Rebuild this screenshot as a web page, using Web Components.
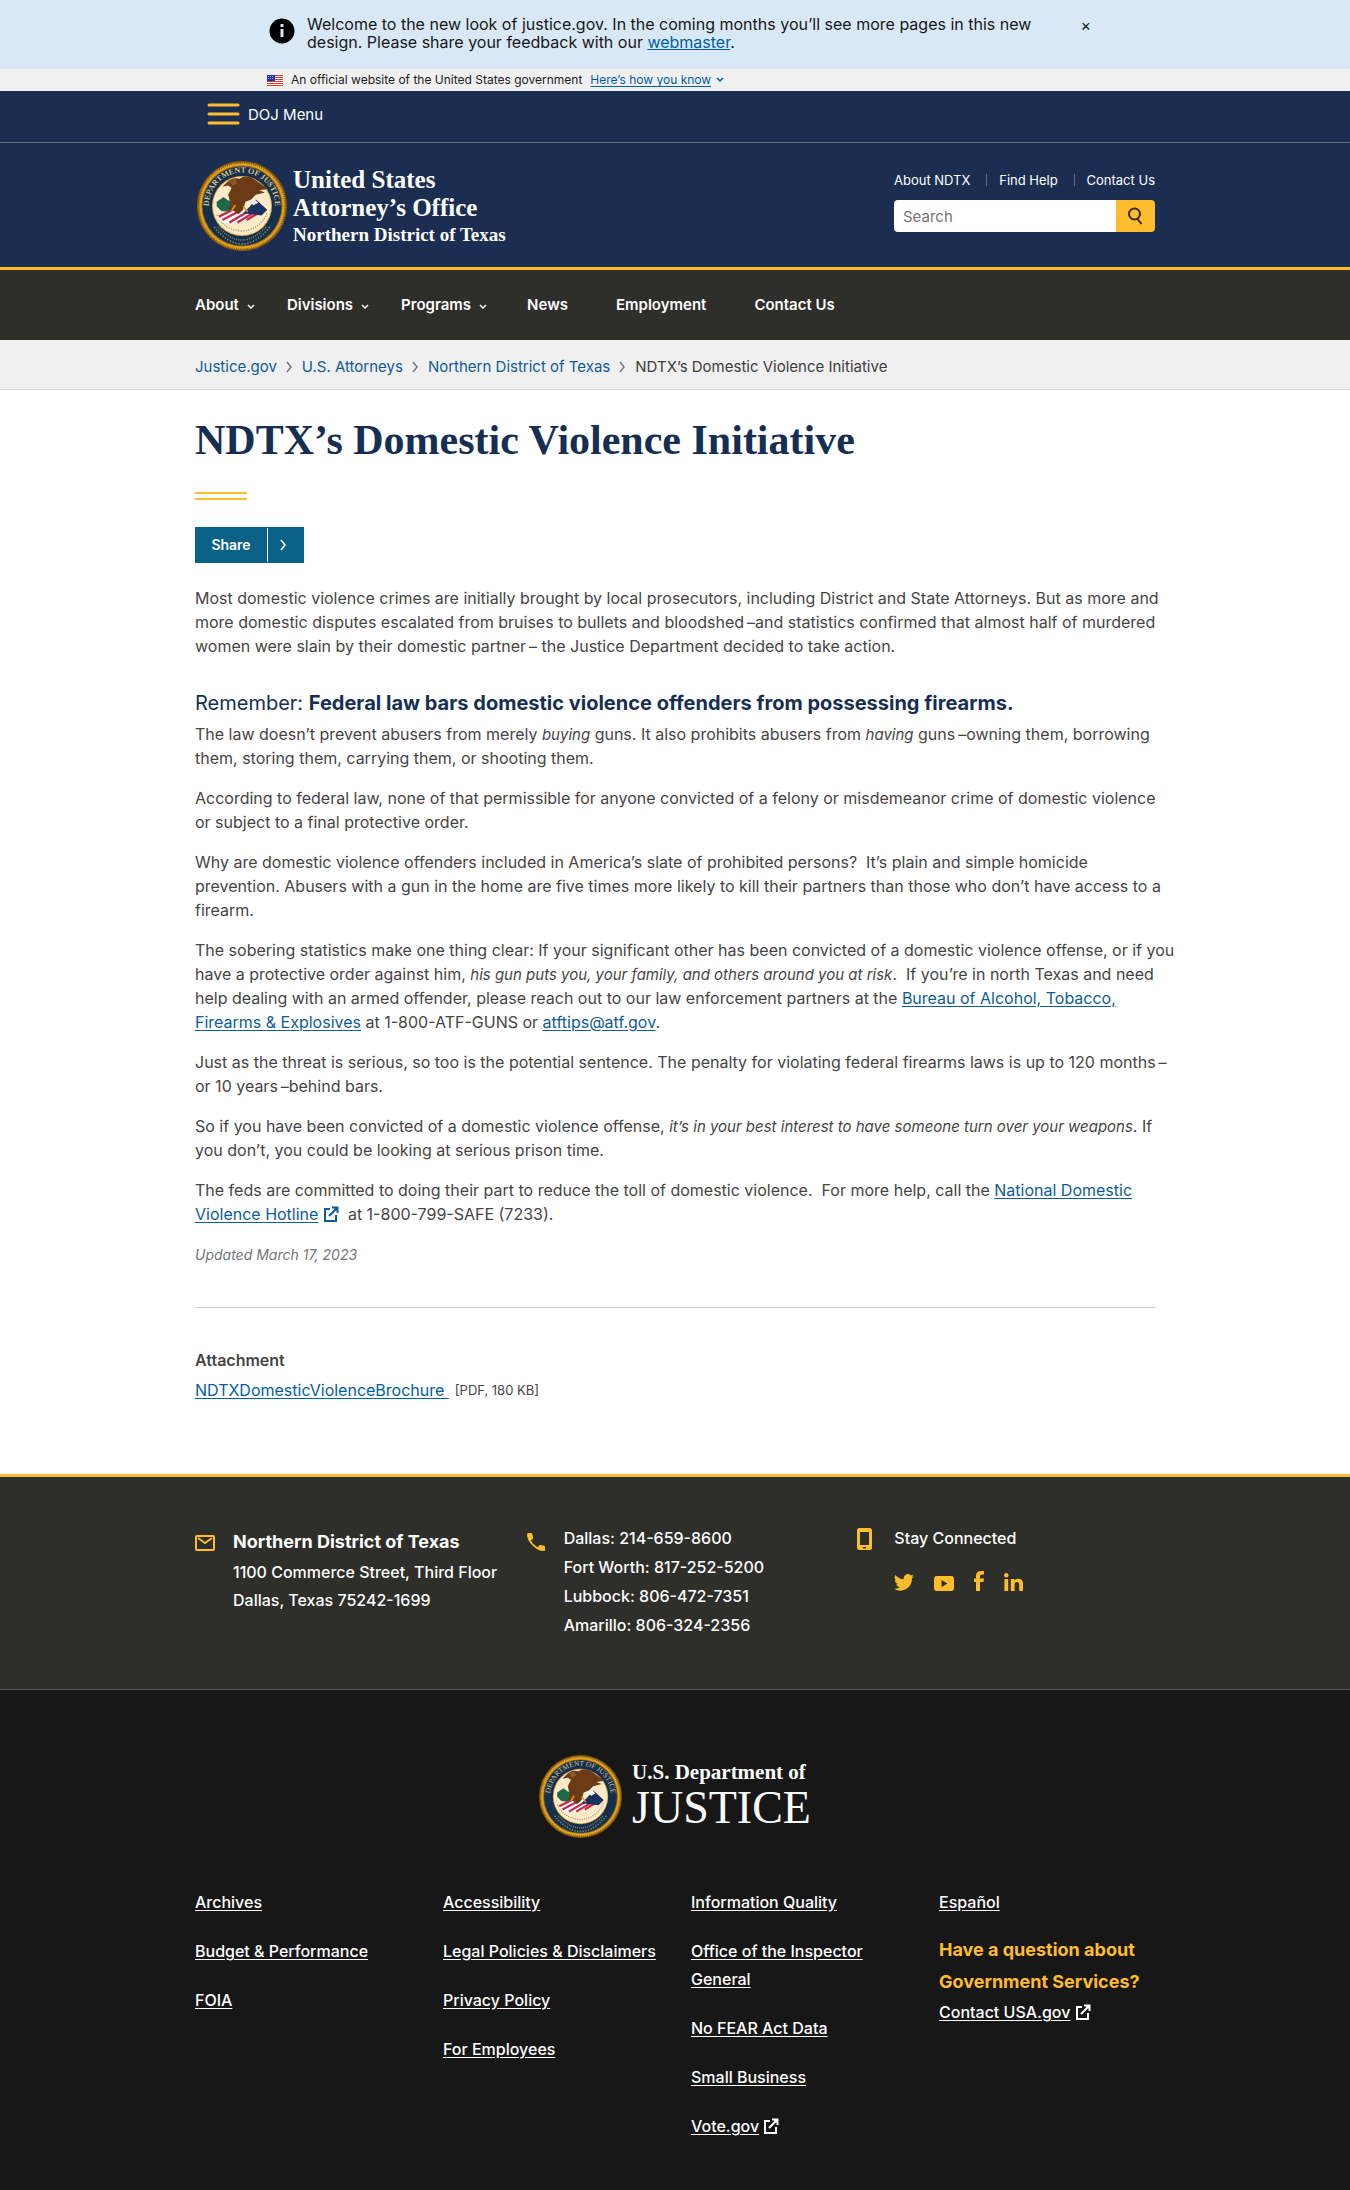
<!DOCTYPE html>
<html lang="en">
<head>
<meta charset="utf-8">
<meta name="viewport" content="width=device-width, initial-scale=1">
<title>Northern District of Texas | NDTX’s Domestic Violence Initiative</title>
<style>
:root{--navy:#1b2e52;--gold:#ffbc2c;--link:#0f5c96;--dark:#2e2e2a;--wrap:960px;--serif:"Liberation Serif",serif}
body{margin:0;background:#171717;color:#454545;font:16px/24px Inter,sans-serif}
</style>
</head>
<body>
<doj-alert></doj-alert>
<gov-banner></gov-banner>
<doj-header></doj-header>
<site-nav></site-nav>
<bread-crumbs></bread-crumbs>
<doj-page heading="NDTX’s Domestic Violence Initiative"></doj-page>
<contact-footer></contact-footer>
<doj-footer></doj-footer>

<script>
const define = (name, html) => customElements.define(name, class extends HTMLElement {
  connectedCallback() {
    if (this.shadowRoot) return;
    const t = document.createElement('template');
    t.innerHTML = '<style>*{box-sizing:border-box}a{color:inherit}ul{list-style:none;margin:0;padding:0}.wrap{max-width:var(--wrap);margin:0 auto}svg{display:block;flex:none}</style>' + (typeof html === 'function' ? html(this) : html);
    this.attachShadow({mode: 'open'}).append(t.content.cloneNode(true));
  }
});
const chevron = (w, h, d, s) => `<svg width="${w}" height="${h}" viewBox="0 0 ${w} ${h}" fill="none" stroke="currentColor" stroke-width="${s}" aria-hidden="true"><path d="${d}"/></svg>`;
const down = chevron(8, 6, 'M1 1l3 3 3-3', 1.5);
const right = chevron(7, 12, 'M1 1l4 5-4 5', 1.5);

define('ext-icon', `<style>:host{display:inline-block;vertical-align:-2px}</style>
<svg width="16" height="16" viewBox="0 0 16 16" fill="none" stroke="currentColor" stroke-width="2" aria-hidden="true"><path d="M7 3H2v12h11V9M6 10l7-7M9 1.500h5.500V7"/><path d="M10 1h5v5z" fill="currentColor" stroke="none"/></svg>`);

define('doj-seal', `<style>:host{display:block;flex:none;width:var(--seal,90px)}svg{width:100%;height:auto}</style>
<svg viewBox="0 0 90 90" role="img" aria-label="Department of Justice seal">
<circle cx="45" cy="45" r="45" fill="#8a5a0c"/><circle cx="45" cy="45" r="43.500" fill="#e0a31d"/>
<circle cx="45" cy="45" r="43" fill="none" stroke="#8a5a0c" stroke-width="1.500" stroke-dasharray="1 1.200"/>
<circle cx="45" cy="45" r="40.500" fill="#9a6712"/><circle cx="45" cy="45" r="39.500" fill="#15304f"/>
<circle cx="45" cy="45" r="30" fill="#e3b04a"/><circle cx="45" cy="45" r="29" fill="#fdebc8"/>
<path id="ring" d="M14 56A33 33 0 1 1 76 56" fill="none"/>
<text font-family="Liberation Serif" font-size="8" fill="#d8c48a" text-anchor="middle"><textPath href="#ring" startOffset="50%">DEPARTMENT OF JUSTICE</textPath></text>
<path d="M17 66Q45 100 73 66" fill="none" stroke="#8b8a5c" stroke-width="1.500" stroke-dasharray="1.500 1.500"/>
<path d="M21 66Q45 92 69 66" fill="none" stroke="#8b8a5c" stroke-width="1.500" stroke-dasharray="1 1.200"/>
<path d="M20 54Q27 69 45 70Q63 69 70 52" fill="none" stroke="#a59270" stroke-width="1.500" stroke-dasharray="1 1.500"/>
<g transform="translate(45 43) scale(1.150) translate(-45 -45)">
<path d="M23 43l6-4 4 3 5 1 4 6-7 3-8-1-4-4z" fill="#1d6a49"/>
<path d="M24 57l16-8h24l-20 12H28z" fill="#fff"/>
<path d="M25 56l12-6M28 59l17-9M34 61l17-10M41 61l15-9M49 59l10-6" stroke="#c4284b" stroke-width="2"/>
<path d="M52 47l5-6 10 9-5 5-16-2z" fill="#1a3262"/><path d="M52 43l3-3 4 4-4 2z" fill="#fff"/>
<path d="M31 27q5-6 12-4 5-4 12 0l13 9-8 1 5 2-8 2-4 4-5 2-2 7-4 4-4-3-5-1 2-5-2-8 3-6-3-2-5 1z" fill="#6b3a17"/>
<path d="M34 25l5-2 2 4-4 2z" fill="#8b5a2e"/><path d="M39 46l-3 5M46 47l4 5" stroke="#d79a1e" stroke-width="1.500"/></g>
</svg>`);

define('doj-alert', `<style>
:host{display:block;background:#d9e8f6;color:#171717;line-height:18px}
.in{display:flex;gap:12px;max-width:840px;margin:0 auto;padding:15px 0 18px 14px}
p{margin:0}.icon{margin:3px 0 0}
button{margin:-2px 0 auto auto;padding:0 4px;border:0;background:none;font:16px/24px Inter,sans-serif;color:#171717}
a{color:#005ea2}</style>
<div class="in"><svg class="icon" width="26" height="26" viewBox="0 0 26 26" aria-hidden="true"><circle cx="13" cy="13" r="12.500"/><path d="M11.500 6h3v3h-3zM11.500 11h3v8h-3z" fill="#d9e8f6"/></svg>
<p>Welcome to the new look of justice.gov. In the coming months you’ll see more pages in this new<br>design. Please share your feedback with our <a href="#webmaster">webmaster</a>.</p><button aria-label="Close">×</button></div>`);

define('gov-banner', `<style>
:host{display:block;background:#f0f0f0;color:#1b1b1b;font-size:12px;line-height:22px}
.in{display:flex;align-items:center;gap:8px;max-width:816px;margin:0 auto}
button{display:flex;align-items:center;gap:5px;border:0;padding:0;background:none;font:inherit;color:#005ea2}u{text-underline-offset:2px}</style>
<div class="in"><svg width="16" height="11" viewBox="0 0 16 11" aria-hidden="true"><path fill="#fff" d="M0 0h16v11H0z"/><path d="M0 .5h16M0 2.500h16M0 4.500h16M0 6.500h16M0 8.500h16M0 10.500h16" stroke="#db3e1f"/><path fill="#1e33b1" d="M0 0h8v6H0z"/><path d="M1 1.500h6M1 3.500h6" stroke="#9aa5e0" stroke-dasharray="1 1"/></svg>
<span>An official website of the United States government</span><button><u>Here’s how you know</u>${down}</button></div>`);

define('doj-header', `<style>
:host{display:block;background:var(--navy);color:#fff;border-bottom:3px solid var(--gold)}
.menu{height:52px;border-bottom:1px solid #5f6d86}
.menu button{display:flex;gap:8px;margin:0 0 0 12px;padding:12px 0;border:0;background:none;color:#fff;font:15px/24px Inter,sans-serif}
.main{display:flex;justify-content:space-between;height:124px}
.brand{display:flex;gap:6px;padding:18px 0 0 2px;color:#fff;text-decoration:none;font-family:var(--serif);font-weight:700}
.brand span{display:block;padding-top:5px;font-size:25px;line-height:28px}.brand small{display:block;font-size:19px;line-height:26px}
.tools{width:261px;padding-top:27px}
ul{display:flex;justify-content:space-between;font-size:13px;line-height:20px}
li+li{display:flex;align-items:center}li+li:before{content:"";height:12px;margin-right:12px;border-left:1px solid #5f6d86}
li a{text-decoration:none}
form{display:flex;margin-top:10px;border-radius:4px;overflow:hidden}
input{flex:1;min-width:0;height:32px;border:0;padding:0 9px;font:15px Inter,sans-serif}input::placeholder{color:#757575}
form button{width:39px;border:0;padding:0 0 0 12px;background:var(--gold);color:#3b2c10}</style>
<div class="menu"><div class="wrap"><button><svg width="33" height="24" viewBox="0 0 33 24" stroke="#ffbc2c" stroke-width="3" stroke-linecap="round" aria-hidden="true"><path d="M2 2h29M2 11h29M2 20h29"/></svg>DOJ Menu</button></div></div>
<div class="wrap main"><a class="brand" href="#home"><doj-seal></doj-seal><span>United States<br>Attorney’s Office<small>Northern District of Texas</small></span></a>
<div class="tools"><ul><li><a href="#about">About NDTX</a></li><li><a href="#help">Find Help</a></li><li><a href="#contact">Contact Us</a></li></ul>
<form><input type="search" placeholder="Search" aria-label="Search"><button type="button" aria-label="Search"><svg width="15" height="18" viewBox="0 0 15 18" fill="none" stroke="currentColor" stroke-width="2"><circle cx="6.500" cy="7" r="5.500"/><path d="M9.500 12l4 5"/></svg></button></form></div></div>`);

define('site-nav', `<style>
:host{display:block;background:var(--dark);color:#fff;font-size:15px;font-weight:600}
ul{display:flex;gap:48px;height:70px;align-items:center}
.sub{margin-right:-16px}a{display:flex;align-items:center;gap:8px;text-decoration:none}svg{margin-top:3px}.last{margin-right:-8px}</style>
<nav class="wrap"><ul><li class="sub"><a href="#about">About ${down}</a></li><li class="sub"><a href="#divisions">Divisions ${down}</a></li><li class="last"><a href="#programs">Programs ${down}</a></li><li><a href="#news">News</a></li><li><a href="#jobs">Employment</a></li><li><a href="#contact">Contact Us</a></li></ul></nav>`);

define('bread-crumbs', `<style>
:host{display:block;background:#f0f0f0;border-bottom:1px solid #dcdee0;color:#3d3d3d;font-size:15px;line-height:22px}
ul{display:flex;flex-wrap:wrap;padding:16px 0 11px}li{display:flex;align-items:center}
a{color:var(--link);text-decoration:none}svg{margin:0 9px;color:#777}</style>
<nav class="wrap" aria-label="Breadcrumbs"><ul><li><a href="#doj">Justice.gov</a>${right}</li><li><a href="#usao">U.S. Attorneys</a>${right}</li><li><a href="#ndtx">Northern District of Texas</a>${right}</li><li>NDTX’s Domestic Violence Initiative</li></ul></nav>`);

define('share-button', `<style>:host{display:block}
button{display:flex;height:36px;align-items:stretch;border:0;padding:0;background:#0a6187;color:#fff;font:600 14px/36px Inter,sans-serif}
span{width:72px}i{display:flex;align-items:center;padding-left:12px;width:37px;margin:1px 0;border-left:1px solid #fff}</style>
<button><span>Share</span><i>${right}</i></button>`);

define('article-body', `<style>
:host{display:block}
p{margin:0 0 16px}em{font-size:15px;line-height:20px}h2{margin:0 0 7px;padding-top:17px;color:#162e51;font-size:20px;line-height:24px;font-weight:400}
h2 strong{font-weight:700}a,ext-icon{color:var(--link)}a{text-underline-offset:2px}
br{display:none}
@media(min-width:1000px){p{white-space:nowrap}br{display:inline}}</style>
<p>Most domestic violence crimes are initially brought by local prosecutors, including District and State Attorneys. But as more and <br>more domestic disputes escalated from bruises to bullets and bloodshed&thinsp;–and statistics confirmed that almost half of murdered <br>women were slain by their domestic partner&thinsp;– the Justice Department decided to take action.</p>
<h2>Remember: <strong>Federal law bars domestic violence offenders from possessing firearms.</strong></h2>
<p>The law doesn’t prevent abusers from merely <em>buying</em> guns. It also prohibits abusers from <em>having</em> guns&thinsp;–owning them, borrowing <br>them, storing them, carrying them, or shooting them.</p>
<p>According to federal law, none of that permissible for anyone convicted of a felony or misdemeanor crime of domestic violence <br>or subject to a final protective order.</p>
<p>Why are domestic violence offenders included in America’s slate of prohibited persons?&nbsp; It’s plain and simple homicide <br>prevention. Abusers with a gun in the home are five times more likely to kill their partners than those who don’t have access to a <br>firearm.</p>
<p>The sobering statistics make one thing clear: If your significant other has been convicted of a domestic violence offense, or if you <br>have a protective order against him, <em>his gun puts you, your family, and others around you at risk</em>.&nbsp; If you’re in north Texas and need <br>help dealing with an armed offender, please reach out to our law enforcement partners at the <a href="#atf">Bureau of Alcohol, Tobacco, <br>Firearms &amp; Explosives</a> at 1-800-ATF-GUNS or <a href="#mail">atftips@atf.gov</a>.</p>
<p>Just as the threat is serious, so too is the potential sentence. The penalty for violating federal firearms laws is up to 120 months&thinsp;– <br>or 10 years&thinsp;–behind bars.</p>
<p>So if you have been convicted of a domestic violence offense, <em>it’s in your best interest to have someone turn over your weapons</em>. If <br>you don’t, you could be looking at serious prison time.</p>
<p>The feds are committed to doing their part to reduce the toll of domestic violence.&nbsp; For more help, call the <a href="#hotline">National Domestic <br>Violence Hotline</a> <ext-icon></ext-icon>&nbsp; at 1-800-799-SAFE (7233).</p>`);

define('doj-page', el => `<style>
:host{display:block;background:#fff;padding-bottom:72px}
h1{margin:0;padding-top:25px;color:#162e51;font:700 42px/50px var(--serif)}
.rule{width:52px;height:8px;margin:27px 0;border:solid var(--gold);border-width:2px 0}
share-button{margin-bottom:23px}
.date{margin:0 0 40px;padding-top:1px;color:#71767a;font-size:14px;font-style:italic}
hr{margin:0 0 40px;border:0;border-top:1px solid #c6cace}
h3{margin:0 0 6px;font-size:16px;line-height:24px;font-weight:600}
.file{display:flex;align-items:center;gap:6px;margin:0}.file a{color:#005ea2;text-underline-offset:2px}.file span{font-size:13px}</style>
<main class="wrap"><h1>${el.getAttribute('heading')}</h1><div class="rule"></div><share-button></share-button>
<article-body></article-body><p class="date">Updated March 17, 2023</p><hr>
<h3>Attachment</h3><p class="file"><a href="#brochure">NDTXDomesticViolenceBrochure&nbsp;</a><span>[PDF, 180 KB]</span></p></main>`);

define('contact-footer', `<style>
:host{display:block;background:var(--dark);color:#fff;border-top:3px solid var(--gold);border-bottom:1px solid #565656;font-weight:500}
.cols{display:grid;grid-template-columns:repeat(3,minmax(0,1fr));column-gap:32px;padding:47px 0 49px}
section{display:flex;line-height:29px}.ic{flex:none;width:38px;padding-top:4px;color:var(--gold)}
p,h2{margin:0;white-space:nowrap}h2{padding-top:2px;font-size:18px;line-height:32px;font-weight:700}.addr{line-height:28px}
.social{display:flex;align-items:flex-end;gap:20px;height:20px;margin-top:18px;color:var(--gold)}.social a{display:block}</style>
<div class="wrap cols">
<section><div class="ic"><svg width="20" height="28" viewBox="0 0 20 28" fill="none" stroke="currentColor" stroke-width="2" aria-hidden="true"><rect x="1" y="8" width="18" height="14" rx="1"/><path d="M3 10l7 5 7-5"/></svg></div><div class="addr"><h2>Northern District of Texas</h2><p>1100 Commerce Street, Third Floor</p><p>Dallas, Texas 75242-1699</p></div></section>
<section><div class="ic"><svg width="20" height="28" viewBox="0 0 20 28" fill="currentColor" aria-hidden="true"><path d="M1 6.500Q1 5 2.500 5H5q1 0 1.300 1l.8 3.500q.1.800-.5 1.400L4.800 12.500q2.300 4.600 6.700 6.800l1.700-1.800q.5-.6 1.400-.4l3.500.7q.9.200.9 1.200V22q0 1-1 1Q12 23 6.500 17.500T1 6.500z"/></svg></div><div><p>Dallas: 214-659-8600</p><p>Fort Worth: 817-252-5200</p><p>Lubbock: 806-472-7351</p><p>Amarillo: 806-324-2356</p></div></section>
<section><div class="ic"><svg width="18" height="24" viewBox="0 0 18 24" aria-hidden="true"><rect x="1" width="15" height="22" rx="2.500" fill="currentColor"/><path fill="#2e2e2a" d="M4 4h9v13H4zM7 19h3v1.500H7z"/></svg></div><div><p>Stay Connected</p><div class="social">
<a href="#twitter" aria-label="Twitter"><svg width="20" height="17" viewBox="0 0 24 20" fill="currentColor"><path d="M24 2.400a10 10 0 0 1-2.800.8A5 5 0 0 0 23.300.5a10 10 0 0 1-3.100 1.200 4.900 4.900 0 0 0-8.400 4.500A14 14 0 0 1 1.700 1 4.900 4.900 0 0 0 3.200 7.600 5 5 0 0 1 1 7c0 2.400 1.700 4.400 3.900 4.900a5 5 0 0 1-2.200.1 4.900 4.900 0 0 0 4.600 3.400A10 10 0 0 1 0 17.400 14 14 0 0 0 21.500 5a10 10 0 0 0 2.500-2.600z"/></svg></a>
<a href="#youtube" aria-label="YouTube"><svg width="20" height="15" viewBox="0 0 20 15"><rect width="20" height="15" rx="3" fill="currentColor"/><path d="M7.500 4l6 3.500-6 3.500z" fill="#2e2e2a"/></svg></a>
<a href="#facebook" aria-label="Facebook"><svg width="10" height="20" viewBox="0 0 10 20" fill="currentColor"><path d="M2 20v-9H0V7.500h2V5q0-5 5-5h3v3.500H8q-2 0-2 1.700v2.300h4L9.500 11H6v9z"/></svg></a>
<a href="#linkedin" aria-label="LinkedIn"><svg width="19" height="18" viewBox="0 0 19 18" fill="currentColor"><circle cx="2.300" cy="2.300" r="2.200"/><path d="M.4 6h3.800v12H.4zM6.800 6h3.600v1.600Q11.500 5.700 14 5.700q5 0 5 5.300v7h-3.800v-6.200q0-2.800-2.200-2.800-2.400 0-2.400 2.900V18H6.800z"/></svg></a>
</div></div></section></div>`);

define('doj-footer', `<style>
:host{display:block;background:#171717;color:#fff;font-weight:500;line-height:28px;padding:65px 0 40px}
.brand{display:flex;justify-content:center;gap:10px;--seal:83px;font-family:var(--serif);text-decoration:none}
.brand span{display:block;padding-top:5px;font-size:21px;line-height:24px;font-weight:700}.brand b{display:block;font-weight:400;font-size:46px;line-height:48px}
.cols{display:grid;grid-template-columns:repeat(4,minmax(0,1fr));column-gap:32px;padding-top:50px}
ul{display:grid;gap:21px;align-content:start}a{text-underline-offset:2px}
h2{margin:18px 0 0;color:var(--gold);font-size:18px;line-height:32px;white-space:nowrap}p{margin:0}</style>
<a class="brand" href="#justice"><doj-seal></doj-seal><span>U.S. Department of<b>JUSTICE</b></span></a>
<div class="wrap cols">
<ul><li><a href="#1">Archives</a></li><li><a href="#2">Budget &amp; Performance</a></li><li><a href="#3">FOIA</a></li></ul>
<ul><li><a href="#4">Accessibility</a></li><li><a href="#5">Legal Policies &amp; Disclaimers</a></li><li><a href="#6">Privacy Policy</a></li><li><a href="#7">For Employees</a></li></ul>
<ul><li><a href="#8">Information Quality</a></li><li><a href="#9">Office of the Inspector General</a></li><li><a href="#10">No FEAR Act Data</a></li><li><a href="#11">Small Business</a></li><li><a href="#12">Vote.gov</a> <ext-icon></ext-icon></li></ul>
<div><a href="#13">Español</a><h2>Have a question about<br>Government Services?</h2><p><a href="#14">Contact USA.gov</a> <ext-icon></ext-icon></p></div>
</div>`);
</script>
</body>
</html>
